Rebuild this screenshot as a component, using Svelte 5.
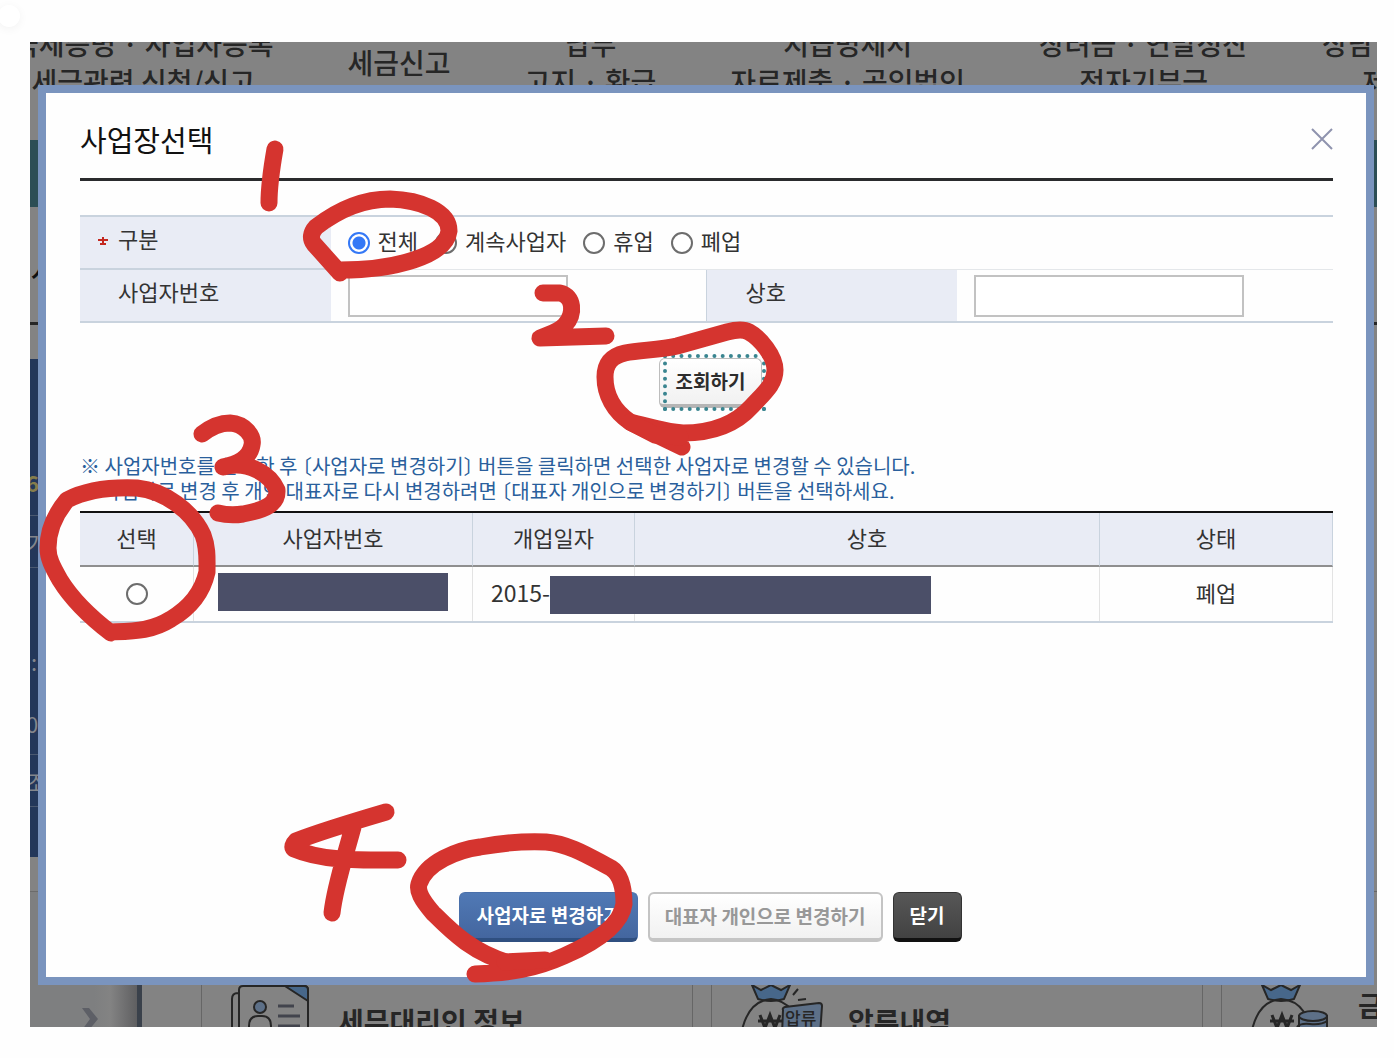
<script>
	let status = 'all';
	let bizNo = '';
	let company = '';
	let picked = '';

	const statuses = [
		{ value: 'all', label: '전체' },
		{ value: 'open', label: '계속사업자' },
		{ value: 'paused', label: '휴업' },
		{ value: 'closed', label: '폐업' }
	];

	const menus = [
		['국세증명 · 사업자등록', '세금관련 신청/신고'],
		['세금신고'],
		['납부', '고지 · 환급'],
		['지급명세서', '자료제출 · 공익법인'],
		['장려금 · 연말정산', '전자기부금'],
		['상담 · 불복 · 고충', '제보 · 기타']
	];

	const columns = ['선택', '사업자번호', '개업일자', '상호', '상태'];
</script>

<svelte:head>
	<title>사업장선택</title>
</svelte:head>

<main class="page">
	<div class="stage">
		<div class="backdrop">
			<nav class="menu">
				{#each menus as lines}
					<div class="menu-item">
						{#each lines as line}
							<span>{line}</span>
						{/each}
					</div>
				{/each}
			</nav>
			<div class="band"></div>
			<div class="service">서비스</div>
			<div class="side">
				<div class="side-row date"><span>6.</span></div>
				<div class="side-row"><span>기</span></div>
				<div class="side-row counts"><span>&nbsp;:</span><span>0</span></div>
				<div class="side-row"><span>조</span></div>
			</div>
			<div class="bottom">
				<div class="quick">
					<svg width="16" height="22" viewBox="0 0 16 22">
						<path d="M0 0H7L16 11L7 22H0L8 11Z" fill="#5d5f66" />
					</svg>
				</div>
				<div class="card">
					<svg width="84" height="50" viewBox="0 0 84 50" fill="none" stroke="#262626" stroke-width="2">
						<path d="M9 50V5Q9 1 13 1H74Q78 1 78 5V50M8 8Q2 8 2 14V50" />
						<path d="M55 1H74Q78 1 78 5V16Z" fill="#47678a" />
						<circle cx="30" cy="22" r="6" fill="#5d7088" />
						<path d="M19 50V41Q19 31 28 31H32Q41 31 41 41V50" />
						<path d="M48 21H64M48 31H70M48 41H70" stroke="#42444d" stroke-width="3" />
					</svg>
					<strong>세무대리인 정보</strong>
				</div>
				<div class="card">
					<svg width="84" height="50" viewBox="0 0 84 50" fill="none" stroke="#262626" stroke-width="2">
						<path d="M12 0L18 14Q31 18 44 14L50 0L41 5L31 0L21 5Z" fill="#47678a" />
						<path d="M1 50Q7 16 31 14Q43 15 52 25" />
						<path d="M53 10L58 4M58 15L66 14" />
						<path d="M18 36H42M20 30L25 43L30 30L35 43L40 30" stroke-width="3" />
						<path d="M43 25Q42 23 45 22L79 18Q82 18 82 21L80 50H42Z" fill="#5d7088" />
						<text x="45" y="40" font-size="17" font-weight="500" fill="#262626" stroke="none">압류</text>
					</svg>
					<strong>압류내역</strong>
				</div>
				<div class="card">
					<svg width="84" height="50" viewBox="0 0 84 50" fill="none" stroke="#262626" stroke-width="2">
						<path d="M12 0L18 14Q31 18 44 14L50 0L41 5L31 0L21 5Z" fill="#47678a" />
						<path d="M1 50Q7 16 31 14Q46 15 54 27" />
						<path d="M20 36H44M22 30L27 43L32 30L37 43L42 30" stroke-width="3" />
						<path d="M49 31V50H77V31Z" fill="#5d7088" />
						<ellipse cx="63" cy="31" rx="14" ry="5" fill="#5d7088" />
						<path d="M47 42Q50 38 60 39Q72 40 77 36" />
					</svg>
					<strong class="high">금융</strong>
				</div>
			</div>
		</div>

		<section class="modal" role="dialog" aria-labelledby="modal-title">
			<header>
				<h1 id="modal-title">사업장선택</h1>
				<button class="close" type="button" aria-label="닫기">
					<svg width="22" height="22" viewBox="0 0 22 22">
						<path d="M1 1L21 21M21 1L1 21" stroke="#8f93ae" stroke-width="2" />
					</svg>
				</button>
			</header>

			<form on:submit|preventDefault>
				<table class="search">
					<colgroup>
						<col class="c-label" />
						<col class="c-field" />
						<col class="c-label" />
						<col class="c-field" />
					</colgroup>
					<tbody>
						<tr>
							<th class="required">
								<svg width="10" height="10" viewBox="0 0 10 10">
									<path d="M5 0V8M0 3H10M2 7H8" stroke="#c4281f" stroke-width="2" />
								</svg>구분
							</th>
							<td colspan="3">
								<div class="radios">
									{#each statuses as s}
										<label>
											<input type="radio" name="status" value={s.value} bind:group={status} />
											{s.label}
										</label>
									{/each}
								</div>
							</td>
						</tr>
						<tr>
							<th><label for="biz-no">사업자번호</label></th>
							<td><input id="biz-no" class="text" type="text" bind:value={bizNo} /></td>
							<th class="second"><label for="company">상호</label></th>
							<td><input id="company" class="text wide" type="text" bind:value={company} /></td>
						</tr>
					</tbody>
				</table>
				<div class="search-action">
					<button class="btn focused" type="submit">조회하기</button>
				</div>
			</form>

			<p class="note">
				<span>※ 사업자번호를 선택한 후 〔사업자로 변경하기〕 버튼을 클릭하면 선택한 사업자로 변경할 수 있습니다.</span>
				<span class="indent">사업자로 변경 후 개인 대표자로 다시 변경하려면 〔대표자 개인으로 변경하기〕 버튼을 선택하세요.</span>
			</p>

			<table class="list">
				<colgroup>
					<col class="c-pick" />
					<col class="c-no" />
					<col class="c-date" />
					<col />
					<col class="c-state" />
				</colgroup>
				<thead>
					<tr>
						{#each columns as column}
							<th>{column}</th>
						{/each}
					</tr>
				</thead>
				<tbody>
					<tr>
						<td><input type="radio" name="pick" value="1" aria-label="선택" bind:group={picked} /></td>
						<td><span class="mask"></span></td>
						<td class="date-cell">2015-<span class="mask long"></span></td>
						<td></td>
						<td>폐업</td>
					</tr>
				</tbody>
			</table>

			<footer>
				<button class="btn primary" type="button">사업자로 변경하기</button>
				<button class="btn muted" type="button">대표자 개인으로 변경하기</button>
				<button class="btn dark" type="button">닫기</button>
			</footer>
		</section>
	</div>

	<span class="dot"></span>

	<!-- hand-drawn step marks -->
	<svg class="marks" width="1394" height="1058" viewBox="0 0 1394 1058">
		<path d="M275 149C272 166 269 185 269 203" />
		<path d="M340 273L314 244Q308 236 316 227C338 210 362 199 390 199C420 200 449 211 449 231C446 256 395 270 340 270" />
		<path d="M543 293H560C574 296 575 314 565 325C558 333 546 335 540 338L606 336" />
		<path d="M630 422C614 411 605 395 605 377C605 363 612 356 625 353C640 350 660 350 677 346L727 332Q742 328 749 332C760 338 775 356 775 370C775 384 765 392 752 406C735 425 710 433 683 433C665 432 648 426 630 422L682 447" />
		<path d="M630 422L655 435L680 437" />
		<path d="M202 434C211 427 219 423 230 423C245 424 254 436 252 445C250 458 238 464 223 467C248 460 270 474 277 490C278 504 265 510 243 514Q230 516 218 513" />
		<path d="M111 633C90 617 73 601 60 580C52 566 48 558 48 548C48 528 57 512 67 500C88 489 113 487 137 488C165 491 192 511 203 535C208 548 207 560 207 572C202 594 188 609 171 619C152 631 135 631 111 632" />
		<path d="M386 812C352 822 322 831 296 841Q291 846 294 849C322 861 358 860 398 860M353 827C345 857 335 886 332 913" />
		<path d="M513 964C473 954 450 930 433 913C421 899 417 891 419 884C426 862 458 850 480 847C502 843 525 841 546 842C570 844 590 857 611 868C622 875 624 890 624 904C621 926 594 943 564 956C535 969 510 973 475 974" />
		<path d="M505 962L545 960" />
	</svg>
</main>

<style>
	:global(body) {
		margin: 0;
		background: #fefefe;
	}

	.page {
		position: relative;
		padding: 42px 17px 31px 30px;
		overflow: hidden;
		font-family: 'Noto Sans CJK KR', sans-serif;
		font-size: 22px;
		color: #333333;
	}

	.stage {
		position: relative;
		display: flex;
	}

	.backdrop {
		position: absolute;
		inset: 0;
		overflow: hidden;
		display: flex;
		flex-direction: column;
		background: #838383;
		color: #262626;
	}

	.menu,
	.band,
	.service,
	.side {
		flex-shrink: 0;
	}

	.menu {
		display: flex;
		align-items: center;
		gap: 74px;
		height: 98px;
		margin-left: -17px;
		padding-bottom: 58px;
		box-sizing: border-box;
		font-size: 28px;
		font-weight: 500;
		line-height: 38px;
		white-space: nowrap;
	}

	.menu-item {
		display: flex;
		flex-direction: column;
		align-items: center;
		flex-shrink: 0;
	}

	.band {
		height: 67px;
		background: #2c4e55;
	}

	.service {
		height: 115px;
		margin-bottom: 34px;
		border-bottom: 3px solid #262626;
		font-size: 36px;
		line-height: 120px;
		color: #111111;
	}

	.side {
		width: 300px;
		height: 498px;
		background: #23375a;
		color: #83868c;
		line-height: 50px;
	}

	.side-row {
		display: flex;
		flex-direction: column;
		justify-content: center;
		height: 51px;
		border-bottom: 1px solid #4a5870;
	}

	.side-row span {
		margin-left: -4px;
	}

	.side-row.date {
		height: 157px;
		padding-top: 90px;
		box-sizing: border-box;
		font-weight: 700;
		color: #857d4c;
	}

	.side-row.counts {
		height: 186px;
		justify-content: flex-end;
		line-height: 62px;
	}

	.bottom {
		display: flex;
		flex: 1;
		align-items: stretch;
	}

	.quick {
		display: flex;
		align-items: flex-start;
		justify-content: flex-end;
		width: 112px;
		margin: 34px 59px 0 0;
		padding: 116px 39px 0 0;
		box-sizing: border-box;
		flex-shrink: 0;
		border-top: 1px solid #6b6b6b;
		border-right: 5px solid #3a414b;
		background: linear-gradient(90deg, #7e7f80 60%, #838383 75%, #5f5f61);
	}

	.card {
		display: flex;
		align-items: flex-start;
		gap: 24px;
		width: 492px;
		margin: 34px 18px 0 0;
		padding: 93px 0 0 28px;
		box-sizing: border-box;
		flex-shrink: 0;
		border: 1px solid #666666;
		border-bottom: 0;
		font-size: 28px;
		white-space: nowrap;
	}

	.card svg {
		flex-shrink: 0;
	}

	.card strong {
		margin-top: 16px;
	}

	.card strong.high {
		margin-top: 0;
	}

	.modal {
		position: relative;
		flex: 1;
		min-width: 0;
		margin: 43px 3px 42px 8px;
		padding: 0 33px 35px 34px;
		border: 8px solid #7a94be;
		background: #fefefe;
	}

	header {
		display: flex;
		justify-content: space-between;
		align-items: center;
		height: 88px;
		padding-top: 6px;
		box-sizing: border-box;
		border-bottom: 3px solid #2a2b2d;
	}

	h1 {
		margin: 0;
		font-size: 29px;
		font-weight: 400;
		color: #111111;
	}

	button {
		font-family: inherit;
		cursor: pointer;
	}

	.close {
		display: flex;
		padding: 0;
		border: 0;
		background: none;
	}

	table {
		width: 100%;
		table-layout: fixed;
		border-collapse: separate;
		border-spacing: 0;
	}

	th {
		font-weight: 400;
		background: #e9ecf5;
	}

	.search {
		margin-top: 34px;
		border-top: 2px solid #c9d3de;
	}

	.c-label {
		width: 20%;
	}

	.c-field {
		width: 30%;
	}

	.search th,
	.search td {
		height: 53px;
		padding: 0;
		box-sizing: border-box;
		text-align: left;
	}

	.search th {
		padding: 0 0 10px 38px;
		border-bottom: 2px solid #c9d3de;
		line-height: 32px;
	}

	.search th.required {
		padding-left: 18px;
	}

	.search th.required svg {
		margin-right: 10px;
		vertical-align: middle;
	}

	.search th.second {
		border-left: 1px solid #c9d3de;
	}

	.search td {
		padding-left: 17px;
		border-bottom: 1px solid #e4e7ea;
	}

	.search tr:last-child td {
		border-bottom: 2px solid #c9d3de;
	}

	.radios {
		display: flex;
		gap: 17px;
		padding-bottom: 6px;
	}

	.radios label {
		display: flex;
		align-items: center;
		gap: 8px;
	}

	input[type='radio'] {
		appearance: none;
		width: 22px;
		height: 22px;
		margin: 0;
		border: 2px solid #6d6d6d;
		border-radius: 50%;
		background: #ffffff;
	}

	input[type='radio']:checked {
		border-color: #3478f6;
		background: radial-gradient(circle, #3478f6 6px, #ffffff 7px);
	}

	.radios input[type='radio'] {
		margin-top: 6px;
	}

	.list input[type='radio'] {
		display: block;
		margin: 4px auto 0;
	}

	.text {
		display: block;
		width: 220px;
		height: 42px;
		padding: 0 8px;
		box-sizing: border-box;
		border: 2px solid #c2c2c2;
		background: #ffffff;
		font: inherit;
	}

	.text.wide {
		width: 270px;
	}

	.search-action {
		display: flex;
		justify-content: center;
		margin-top: 35px;
		padding-left: 8px;
	}

	.btn {
		position: relative;
		height: 50px;
		padding: 0 16px 2px;
		border: 1px solid #bdbdbd;
		border-bottom: 4px solid #b5b5b5;
		border-radius: 6px;
		background: linear-gradient(#ffffff, #f1f1f1);
		font-size: 19px;
		font-weight: 700;
		color: #2d2d2d;
		white-space: nowrap;
	}

	.focused::after {
		content: '';
		position: absolute;
		inset: -5px -5px -7px 3px;
		border: 4px dotted #3a8590;
	}

	.primary {
		border-color: #4a70ab;
		border-bottom-color: #2f4f80;
		background: linear-gradient(#5079b5, #44669f);
		color: #ffffff;
	}

	.muted {
		border: 2px solid #c4c4c4;
		border-bottom-width: 4px;
		padding: 0 15px 2px;
		color: #989898;
	}

	.dark {
		border-color: #333333;
		border-bottom-color: #111111;
		background: linear-gradient(#575757, #424242);
		color: #ffffff;
	}

	.note {
		display: flex;
		flex-direction: column;
		margin: 45px 0 8px;
		font-size: 20px;
		line-height: 25px;
		font-feature-settings: 'halt';
		color: #2a5f9c;
		white-space: nowrap;
	}

	.indent {
		padding-left: 22px;
	}

	.list {
		border-top: 2px solid #111111;
		border-bottom: 2px solid #c9d3de;
	}

	.list th,
	.list td {
		height: 54px;
		padding: 0 0 5px;
		box-sizing: border-box;
		border-right: 1px solid #e3e3e3;
		line-height: 32px;
		text-align: center;
	}

	.list th {
		border-right-color: #c9d3de;
		border-bottom: 2px solid #8f8f8f;
	}

	.c-pick {
		width: 114px;
	}

	.c-no {
		width: 279px;
	}

	.c-date {
		width: 162px;
	}

	.c-state {
		width: 233px;
	}

	.list .date-cell {
		padding-left: 18px;
		font-size: 23px;
		text-align: left;
		white-space: nowrap;
	}

	.mask {
		display: inline-block;
		width: 230px;
		height: 38px;
		background: #4b4f68;
		vertical-align: middle;
	}

	/* runs over the company column as well */
	.mask.long {
		position: absolute;
		width: 381px;
	}

	footer {
		display: flex;
		justify-content: center;
		gap: 10px;
		margin-top: 269px;
		padding-left: 8px;
	}

	.dot {
		position: absolute;
		top: 5px;
		left: -2px;
		width: 22px;
		height: 22px;
		border-radius: 50%;
		background: #ffffff;
		box-shadow: 0 2px 10px rgba(0, 0, 0, 0.05);
	}

	.marks {
		position: absolute;
		top: 0;
		left: 0;
		pointer-events: none;
		fill: none;
		stroke: #d5342f;
		stroke-width: 17px;
		stroke-linecap: round;
		stroke-linejoin: round;
	}
</style>
